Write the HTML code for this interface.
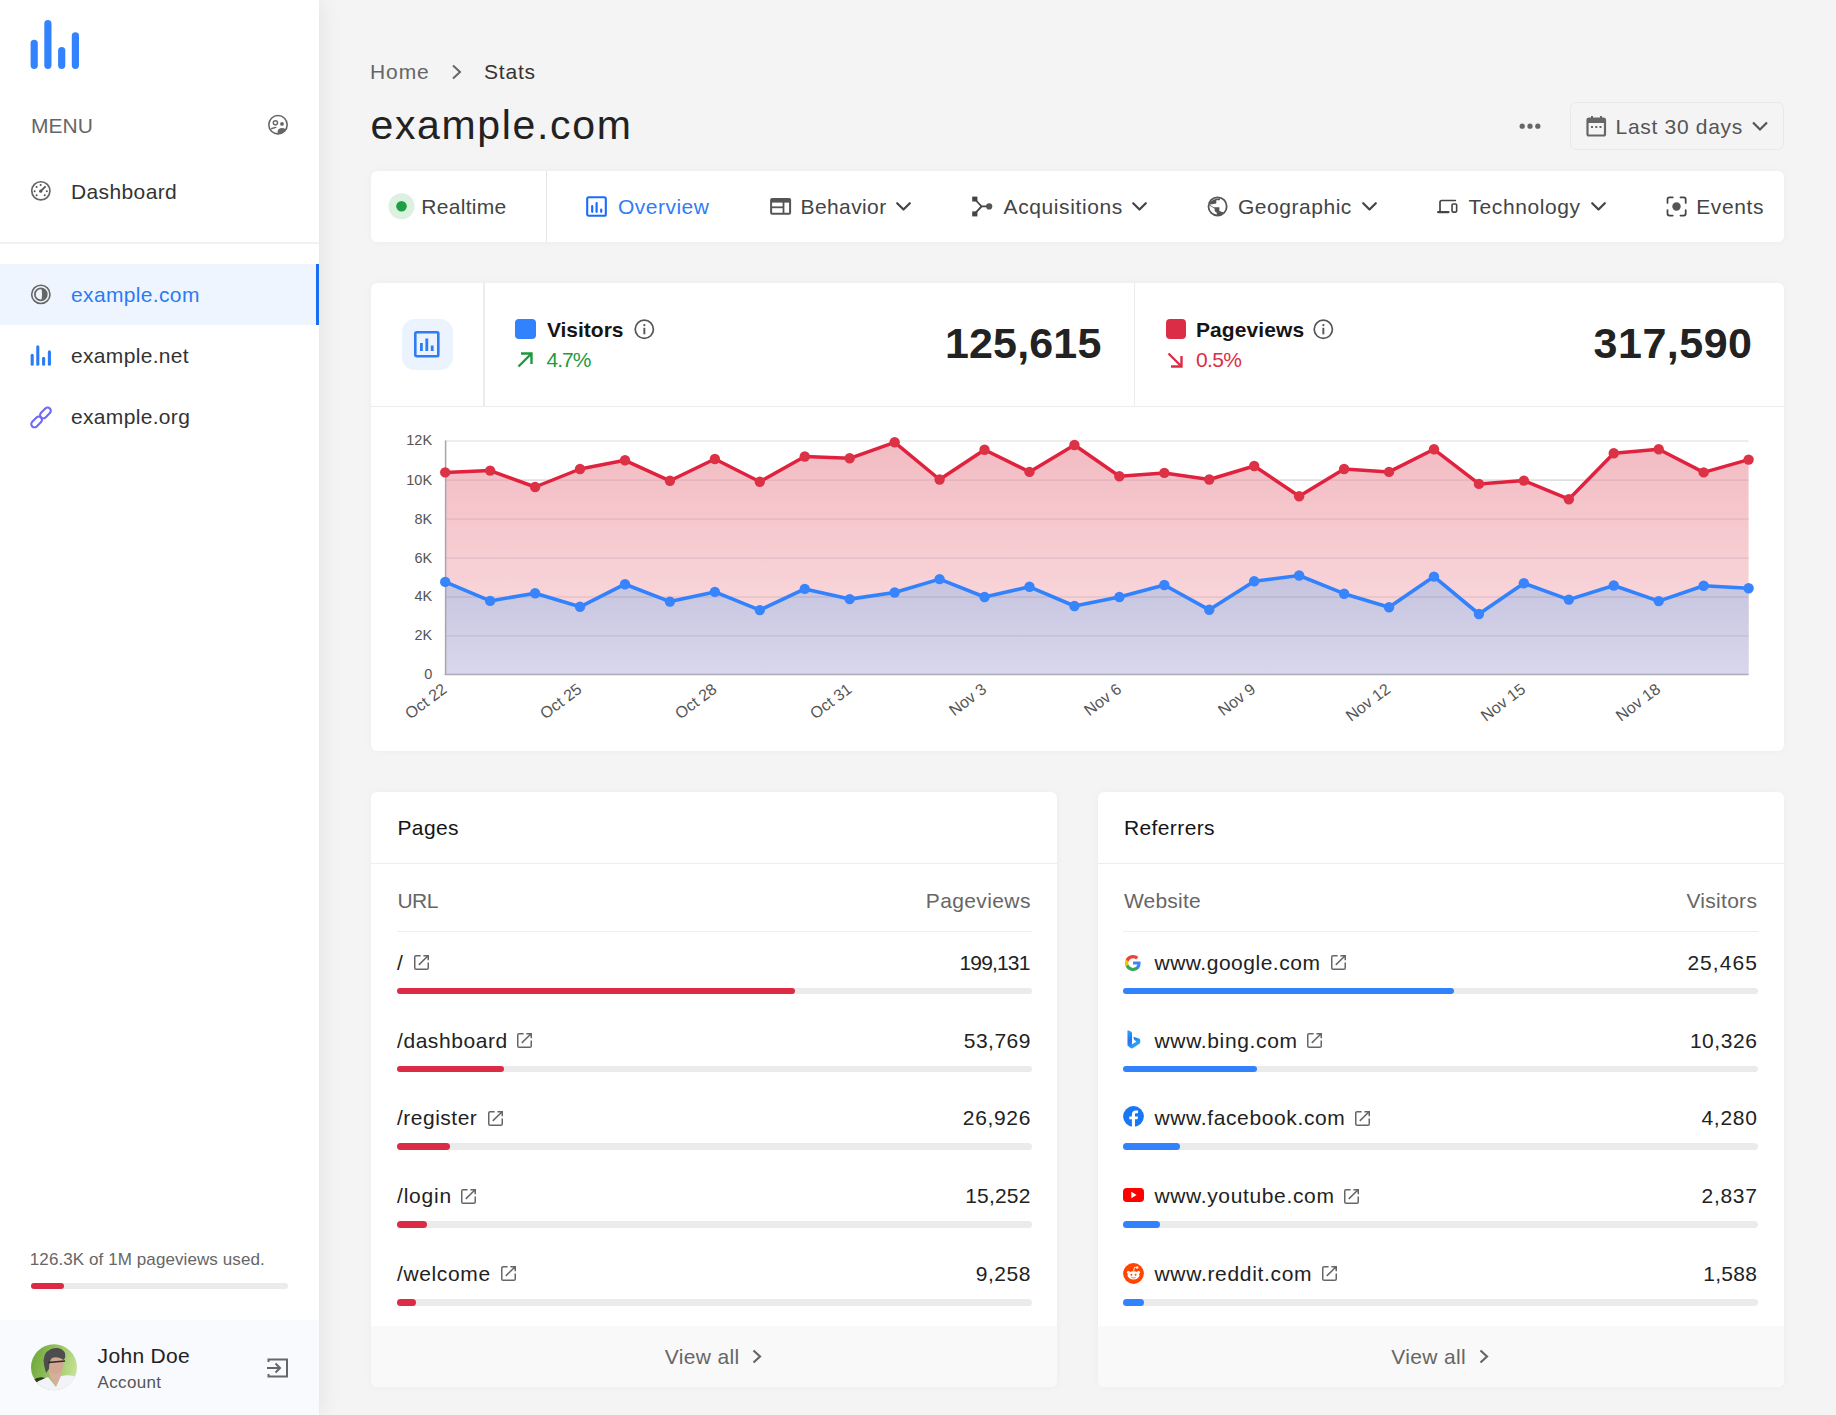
<!DOCTYPE html><html><head><meta charset="utf-8"><style>
html,body{margin:0;padding:0;width:1836px;height:1415px;overflow:hidden;background:#f4f4f4;font-family:'Liberation Sans',sans-serif;}
.t{position:absolute;line-height:1;white-space:nowrap;}
.a{position:absolute;}
svg{position:absolute;overflow:visible;}
</style></head><body>
<div class="a" style="left:0;top:0;width:319px;height:1415px;background:#fff;box-shadow:0 0 22px rgba(0,0,0,0.085);"></div>
<svg style="left:0;top:0" width="100" height="80"><g stroke="#3382fe" stroke-width="7.2" stroke-linecap="round"><line x1="34.2" y1="43.3" x2="34.2" y2="65.3"/><line x1="47.9" y1="23.7" x2="47.9" y2="65.3"/><line x1="61.7" y1="50.5" x2="61.7" y2="65.3"/><line x1="75.4" y1="35.9" x2="75.4" y2="65.3"/></g></svg>
<div class="t" style="left:31px;top:114.72px;font-size:21px;color:#666;font-weight:400;letter-spacing:0px;">MENU</div>
<svg style="left:267px;top:114px" width="22" height="22" viewBox="0 0 22 22"><circle cx="11" cy="10.7" r="9.2" fill="none" stroke="#666" stroke-width="1.6"/><circle cx="8.4" cy="8.8" r="2.1" fill="none" stroke="#666" stroke-width="1.4"/><circle cx="15" cy="9.9" r="1.9" fill="#666"/><path d="M10.6 19.9 Q10.3 16.3 11.5 15.2 Q13.5 13.8 16.5 14.2 Q18.3 14.5 19.3 15.3 Q17.2 19.6 12 19.95 Z" fill="#666"/><path d="M4.8 14.5 L8.8 13.4" fill="none" stroke="#666" stroke-width="1.5" stroke-linecap="round"/></svg>
<svg style="left:30px;top:180px" width="22" height="22" viewBox="0 0 22 22"><circle cx="10.84" cy="10.84" r="9.1" fill="none" stroke="#666" stroke-width="1.7"/><path d="M10.7 11.2 L15.1 6.8" stroke="#555" stroke-width="1.8" stroke-linecap="round"/><circle cx="10.7" cy="11.2" r="1.6" fill="#555"/><g fill="#555"><circle cx="10.64" cy="5.04" r="1"/><circle cx="6.64" cy="7.04" r="1"/><circle cx="4.64" cy="11.14" r="1"/><circle cx="16.84" cy="11.14" r="1"/><circle cx="6.64" cy="15.14" r="1"/><circle cx="14.74" cy="15.14" r="1"/></g></svg>
<div class="t" style="left:71px;top:181.32px;font-size:21px;color:#333;font-weight:400;letter-spacing:0.38px;">Dashboard</div>
<div class="a" style="left:0;top:242px;width:319px;height:2px;background:#f1f1f1"></div>
<div class="a" style="left:0;top:264px;width:319px;height:61px;background:#eff5fe"></div>
<div class="a" style="left:316px;top:264px;width:3px;height:61px;background:#1a6ef5"></div>
<svg style="left:30px;top:284px" width="22" height="22" viewBox="0 0 22 22"><circle cx="10.84" cy="10.4" r="9.15" fill="none" stroke="#666" stroke-width="1.6"/><circle cx="10.84" cy="10.4" r="5.95" fill="none" stroke="#666" stroke-width="1.7"/><path d="M11.6 4.5 A5.95 5.95 0 0 1 11.6 16.3 Q12.6 10.4 11.6 4.5 Z" fill="#666"/></svg>
<div class="t" style="left:71px;top:284.42px;font-size:21px;color:#2a7bf5;font-weight:400;letter-spacing:0.35px;">example.com</div>
<svg style="left:30px;top:345px" width="22" height="22"><g stroke="#2b7bf6" stroke-width="3.1" stroke-linecap="round"><line x1="2.2" y1="10.2" x2="2.2" y2="19.2"/><line x1="7.8" y1="1.7" x2="7.8" y2="19.2"/><line x1="13.6" y1="13.3" x2="13.6" y2="19.2"/><line x1="19.4" y1="6.9" x2="19.4" y2="19.2"/></g></svg>
<div class="t" style="left:71px;top:345.42px;font-size:21px;color:#333;font-weight:400;letter-spacing:0.33px;">example.net</div>
<svg style="left:30px;top:406px" width="22" height="22" viewBox="0 0 22 22"><g fill="none" stroke="#6e69f7" stroke-width="2.1"><rect x="9.2" y="3.8" width="12.5" height="6.4" rx="3.2" transform="rotate(-45 15.4 7)"/><rect x="0.4" y="12.8" width="12.5" height="6.4" rx="3.2" transform="rotate(-45 6.6 16)"/></g></svg>
<div class="t" style="left:71px;top:406.42px;font-size:21px;color:#333;font-weight:400;letter-spacing:0.33px;">example.org</div>
<div class="t" style="left:29.8px;top:1251.31px;font-size:17px;color:#666;font-weight:400;letter-spacing:0.09px;">126.3K of 1M pageviews used.</div>
<div class="a" style="left:31px;top:1282.5px;width:257px;height:6.5px;border-radius:4px;background:#ebebeb"></div>
<div class="a" style="left:31px;top:1282.5px;width:33px;height:6.5px;border-radius:4px;background:#dc2a44"></div>
<div class="a" style="left:0;top:1319.5px;width:319px;height:96px;background:#f8fafe"></div>
<svg style="left:30.5px;top:1344px" width="46" height="47" viewBox="0 0 46 47"><defs><clipPath id="av"><circle cx="23" cy="23.3" r="23"/></clipPath><linearGradient id="avg" x1="0" y1="0.3" x2="1" y2="0.6"><stop offset="0" stop-color="#6fa83a"/><stop offset="0.5" stop-color="#98c461"/><stop offset="1" stop-color="#c9e39a"/></linearGradient></defs><g clip-path="url(#av)"><rect width="46" height="47" fill="url(#avg)"/><path d="M2 36 Q8 32 14 34 L8 40 Z" fill="#2a3a1a"/><path d="M17 24 L31 24 L30 33 L25 43 L19 33 Z" fill="#d6ae9c"/><path d="M0 42 Q8 36 17 33 L25 43 L30 32 Q38 30 46 33 L46 47 L0 47 Z" fill="#f1f3f8"/><ellipse cx="24.5" cy="19.5" rx="8" ry="10.5" fill="#d2a893"/><path d="M13 21 Q11 9 20 5 Q30 2 34 9 Q35 13 33 16 Q27 12 21 14 Q18 17 18 25 L15 29 Z" fill="#4d4d4d"/><path d="M17 18.5 L34 17" stroke="#2b2b2b" stroke-width="1.6"/></g></svg>
<div class="t" style="left:97.6px;top:1345.22px;font-size:21px;color:#222;font-weight:400;letter-spacing:0.33px;">John Doe</div>
<div class="t" style="left:97.6px;top:1373.61px;font-size:17px;color:#555;font-weight:400;letter-spacing:0.33px;">Account</div>
<svg style="left:266px;top:1356.5px" width="23" height="22" viewBox="0 0 23 22"><path d="M2.5 5 V2.5 H21 V19.5 H2.5 V17" fill="none" stroke="#666" stroke-width="2"/><path d="M1 11 H14 M9.5 6.5 L14 11 L9.5 15.5" fill="none" stroke="#666" stroke-width="2"/></svg>
<div class="t" style="left:370px;top:61.32px;font-size:21px;color:#666;font-weight:400;letter-spacing:0.9px;">Home</div>
<svg style="left:450px;top:63px" width="14" height="18"><path d="M3 2.5 L10 9 L3 15.5" fill="none" stroke="#666" stroke-width="2"/></svg>
<div class="t" style="left:484px;top:61.32px;font-size:21px;color:#333;font-weight:400;letter-spacing:0.8px;">Stats</div>
<div class="t" style="left:370.5px;top:105.19px;font-size:41px;color:#222;font-weight:400;letter-spacing:1.65px;">example.com</div>
<svg style="left:1518px;top:121px" width="24" height="10"><circle cx="4.2" cy="5.2" r="2.6" fill="#666"/><circle cx="12" cy="5.2" r="2.6" fill="#666"/><circle cx="19.8" cy="5.2" r="2.6" fill="#666"/></svg>
<div class="a" style="left:1570px;top:102px;width:211.5px;height:46px;border:1px solid #e9e9e9;border-radius:6px;background:#f4f4f4"></div>
<svg style="left:1586px;top:115px" width="21" height="23" viewBox="0 0 21 23"><rect x="1.5" y="3.5" width="17.5" height="17" rx="1.5" fill="none" stroke="#666" stroke-width="2.2"/><rect x="1.5" y="3.5" width="17.5" height="4.5" fill="#666"/><rect x="5" y="1" width="2" height="4" fill="#666"/><rect x="14" y="1" width="2" height="4" fill="#666"/><rect x="5" y="11" width="2" height="2" fill="#666"/><rect x="9.3" y="11" width="2" height="2" fill="#666"/><rect x="13.5" y="11" width="2" height="2" fill="#666"/></svg>
<div class="t" style="left:1615.5px;top:116.02px;font-size:21px;color:#555;font-weight:400;letter-spacing:0.7px;">Last 30 days</div>
<svg style="left:1751px;top:120px" width="18" height="12"><path d="M2 2.5 L9 9.5 L16 2.5" fill="none" stroke="#555" stroke-width="2.2"/></svg>
<div class="a" style="left:371px;top:171px;width:1412.6px;height:71px;background:#fff;border-radius:6px;box-shadow:0 0 8px rgba(0,0,0,0.035)"></div>
<div class="a" style="left:545.8px;top:171px;width:1px;height:71px;background:#e6e6e6"></div>
<svg style="left:388px;top:193px" width="27" height="27"><circle cx="13.5" cy="13.2" r="13" fill="#dcf1e0"/><circle cx="13.5" cy="13.2" r="5.3" fill="#1f9f43"/></svg>
<div class="t" style="left:421.3px;top:196.12px;font-size:21px;color:#444;font-weight:400;letter-spacing:0.3px;">Realtime</div>
<svg style="left:586px;top:196px" width="21" height="21" viewBox="0 0 21 21"><rect x="1.2" y="1.2" width="18.6" height="18.6" rx="1.6" fill="none" stroke="#1a6cfc" stroke-width="2.1"/><line x1="6.2" y1="10" x2="6.2" y2="15.8" stroke="#1a6cfc" stroke-width="2.2" stroke-linecap="round"/><line x1="10.6" y1="7" x2="10.6" y2="15.8" stroke="#1a6cfc" stroke-width="2.2" stroke-linecap="round"/><line x1="15.2" y1="13.7" x2="15.2" y2="15.8" stroke="#1a6cfc" stroke-width="2.2" stroke-linecap="round"/></svg>
<div class="t" style="left:618px;top:196.12px;font-size:21px;color:#2f7cf6;font-weight:400;letter-spacing:0.49px;">Overview</div>
<svg style="left:769.5px;top:198px" width="22" height="17" viewBox="0 0 22 17"><rect x="1.1" y="1.1" width="19" height="14.6" rx="1" fill="none" stroke="#555" stroke-width="2"/><rect x="1.1" y="1.1" width="19" height="3.5" fill="#555"/><line x1="1" y1="9.3" x2="13" y2="9.3" stroke="#555" stroke-width="1.8"/><line x1="13.5" y1="4" x2="13.5" y2="16" stroke="#555" stroke-width="1.8"/></svg>
<div class="t" style="left:800.5px;top:196.12px;font-size:21px;color:#444;font-weight:400;letter-spacing:0.4px;">Behavior</div>
<svg style="left:895.0px;top:201px" width="17" height="11"><path d="M2.2 2.2 L8.5 8.5 L14.8 2.2" fill="none" stroke="#444" stroke-width="2.2" stroke-linecap="round" stroke-linejoin="round"/></svg>
<svg style="left:970.5px;top:196px" width="23" height="22" viewBox="0 0 23 22"><rect x="1.2" y="0.6" width="5.2" height="4.9" fill="#444"/><rect x="1.2" y="15.4" width="5.2" height="5" fill="#444"/><circle cx="18.2" cy="10.4" r="3.1" fill="#555"/><path d="M4.5 4 L10.6 10.4 L4.5 16.8 M10.6 10.4 H16" fill="none" stroke="#444" stroke-width="1.8"/></svg>
<div class="t" style="left:1003.6px;top:196.12px;font-size:21px;color:#444;font-weight:400;letter-spacing:0.6px;">Acquisitions</div>
<svg style="left:1131.0px;top:201px" width="17" height="11"><path d="M2.2 2.2 L8.5 8.5 L14.8 2.2" fill="none" stroke="#444" stroke-width="2.2" stroke-linecap="round" stroke-linejoin="round"/></svg>
<svg style="left:1207px;top:196px" width="22" height="22" viewBox="0 0 22 22"><circle cx="10.6" cy="10.4" r="9.1" fill="none" stroke="#555" stroke-width="1.8"/><path d="M2.2 7.8 Q5 2.5 13.4 2.2 L12.7 4.2 H9.3 V7.4 L6.3 8.1 L3.2 8.6 Z" fill="#555"/><path d="M2.6 8.4 L6.5 11.3 H12.4 V15.1 L16.6 16.4 Q14.5 19 10.1 19.5 L9.7 16.7 L7.7 14.9 V12.7 L2.6 9.6 Z" fill="#555"/></svg>
<div class="t" style="left:1238px;top:196.12px;font-size:21px;color:#444;font-weight:400;letter-spacing:0.53px;">Geographic</div>
<svg style="left:1360.5px;top:201px" width="17" height="11"><path d="M2.2 2.2 L8.5 8.5 L14.8 2.2" fill="none" stroke="#444" stroke-width="2.2" stroke-linecap="round" stroke-linejoin="round"/></svg>
<svg style="left:1436.5px;top:198px" width="22" height="17" viewBox="0 0 22 17"><path d="M3 13.7 V4.2 Q3 2.5 4.7 2.5 H18.3" fill="none" stroke="#444" stroke-width="1.7" stroke-linecap="round"/><line x1="1.1" y1="14.05" x2="11.5" y2="14.05" stroke="#444" stroke-width="2.2" stroke-linecap="round"/><rect x="15.05" y="5.95" width="4.6" height="8.15" rx="1" fill="none" stroke="#444" stroke-width="1.6"/></svg>
<div class="t" style="left:1468.4px;top:196.12px;font-size:21px;color:#444;font-weight:400;letter-spacing:0.61px;">Technology</div>
<svg style="left:1589.5px;top:201px" width="17" height="11"><path d="M2.2 2.2 L8.5 8.5 L14.8 2.2" fill="none" stroke="#444" stroke-width="2.2" stroke-linecap="round" stroke-linejoin="round"/></svg>
<svg style="left:1665px;top:196px" width="23" height="22" viewBox="0 0 23 22"><path d="M2.5 6.9 V3.4 Q2.5 1.4 4.5 1.4 H7.7 M15.5 1.4 H18.7 Q20.7 1.4 20.7 3.4 V6.9 M20.7 14.1 V17.6 Q20.7 19.6 18.7 19.6 H15.5 M7.7 19.6 H4.5 Q2.5 19.6 2.5 17.6 V14.1" fill="none" stroke="#444" stroke-width="1.75" stroke-linecap="round"/><circle cx="11.5" cy="10.5" r="4.2" fill="#555"/></svg>
<div class="t" style="left:1696.2px;top:196.12px;font-size:21px;color:#444;font-weight:400;letter-spacing:0.6px;">Events</div>
<div class="a" style="left:371px;top:283px;width:1412.6px;height:468px;background:#fff;border-radius:6px;box-shadow:0 0 8px rgba(0,0,0,0.035)"></div>
<div class="a" style="left:483px;top:283px;width:1.5px;height:123px;background:#ececec"></div>
<div class="a" style="left:1133.5px;top:283px;width:1.5px;height:123px;background:#ececec"></div>
<div class="a" style="left:371px;top:405.5px;width:1412.5px;height:1.5px;background:#ececec"></div>
<div class="a" style="left:402px;top:319px;width:51px;height:50.5px;border-radius:13px;background:#ebf3fe"></div>
<svg style="left:414px;top:331px" width="26" height="27" viewBox="0 0 26 27"><rect x="1.3" y="1.3" width="23" height="24" rx="1.2" fill="none" stroke="#2f7cf6" stroke-width="2.6"/><rect x="6" y="12" width="2.8" height="8" fill="#2f7cf6"/><rect x="11.4" y="7.5" width="2.8" height="12.5" fill="#2f7cf6"/><rect x="16.8" y="14.5" width="2.8" height="5.5" fill="#2f7cf6"/></svg>
<div class="a" style="left:515px;top:319px;width:20.5px;height:20px;border-radius:4px;background:#3281fd"></div>
<div class="t" style="left:546.9px;top:318.52px;font-size:21px;color:#151515;font-weight:700;letter-spacing:0px;">Visitors</div>
<svg style="left:633.5px;top:318.5px" width="21" height="21" viewBox="0 0 21 21"><circle cx="10.3" cy="10.3" r="9.1" fill="none" stroke="#555" stroke-width="1.7"/><rect x="9.4" y="8.8" width="1.9" height="6.5" fill="#555"/><circle cx="10.35" cy="6.1" r="1.15" fill="#555"/></svg>
<svg style="left:516px;top:351px" width="19" height="18"><path d="M2.5 15.5 L15.5 2.5 M5 2.5 H15.5 V13" fill="none" stroke="#1e9a3e" stroke-width="2.4"/></svg>
<div class="t" style="left:546.5px;top:349.22px;font-size:21px;color:#1e9a3e;font-weight:400;letter-spacing:-1.0px;">4.7%</div>
<div class="t" style="right:734.5px;top:321.50px;font-size:43px;color:#222;font-weight:700;letter-spacing:0.17px;">125,615</div>
<div class="a" style="left:1165.5px;top:319px;width:20.5px;height:20px;border-radius:4px;background:#dc2d46"></div>
<div class="t" style="left:1196px;top:318.52px;font-size:21px;color:#151515;font-weight:700;letter-spacing:0.09px;">Pageviews</div>
<svg style="left:1313px;top:318.5px" width="21" height="21" viewBox="0 0 21 21"><circle cx="10.3" cy="10.3" r="9.1" fill="none" stroke="#555" stroke-width="1.7"/><rect x="9.4" y="8.8" width="1.9" height="6.5" fill="#555"/><circle cx="10.35" cy="6.1" r="1.15" fill="#555"/></svg>
<svg style="left:1166px;top:351px" width="19" height="18"><path d="M2.5 2.5 L15.5 15.5 M5 15.5 H15.5 V5" fill="none" stroke="#dc2d46" stroke-width="2.4"/></svg>
<div class="t" style="left:1196px;top:349.22px;font-size:21px;color:#dc2d46;font-weight:400;letter-spacing:-0.67px;">0.5%</div>
<div class="t" style="right:83.5px;top:322.20px;font-size:43px;color:#222;font-weight:700;letter-spacing:0.5px;">317,590</div>
<svg style="left:0;top:0" width="1836" height="760" viewBox="0 0 1836 760"><defs><linearGradient id="rg" x1="0" y1="440" x2="0" y2="674" gradientUnits="userSpaceOnUse"><stop offset="0" stop-color="#f2bbc2"/><stop offset="1" stop-color="#fbe0e3"/></linearGradient><linearGradient id="bg" x1="0" y1="575" x2="0" y2="674" gradientUnits="userSpaceOnUse"><stop offset="0" stop-color="#c6c3df"/><stop offset="1" stop-color="#d9d7eb"/></linearGradient></defs><line x1="445.2" y1="441" x2="1748.6" y2="441" stroke="#e8e8e8" stroke-width="1.3"/><line x1="445.2" y1="480.1" x2="1748.6" y2="480.1" stroke="#e8e8e8" stroke-width="1.3"/><line x1="445.2" y1="519.2" x2="1748.6" y2="519.2" stroke="#e8e8e8" stroke-width="1.3"/><line x1="445.2" y1="558.1" x2="1748.6" y2="558.1" stroke="#e8e8e8" stroke-width="1.3"/><line x1="445.2" y1="597" x2="1748.6" y2="597" stroke="#e8e8e8" stroke-width="1.3"/><line x1="445.2" y1="635.8" x2="1748.6" y2="635.8" stroke="#e8e8e8" stroke-width="1.3"/><polygon points="445.2,674.2 445.20,472.4 490.14,470.6 535.09,487 580.03,469 624.98,460.3 669.92,480.8 714.87,459 759.81,481.8 804.76,456.5 849.70,458.3 894.65,442.3 939.59,479.5 984.54,449.8 1029.48,471.9 1074.43,445 1119.37,476.2 1164.32,472.9 1209.26,479.5 1254.21,466 1299.15,496.2 1344.10,469 1389.04,471.9 1433.99,449.3 1478.93,483.9 1523.88,480.6 1568.82,499.2 1613.77,453.2 1658.71,449.3 1703.66,472.4 1748.60,459.6 1748.6,674.2" fill="url(#rg)"/><polygon points="445.2,674.2 445.20,581.9 490.14,600.9 535.09,593.2 580.03,606.8 624.98,584.2 669.92,601.6 714.87,591.9 759.81,610.1 804.76,588.9 849.70,599.1 894.65,592.5 939.59,579.1 984.54,597 1029.48,586.8 1074.43,606 1119.37,597 1164.32,585 1209.26,609.8 1254.21,581.2 1299.15,575.5 1344.10,593.7 1389.04,607.3 1433.99,576.6 1478.93,614 1523.88,583.2 1568.82,599.6 1613.77,585.5 1658.71,601.1 1703.66,585.8 1748.60,588.3 1748.6,674.2" fill="url(#bg)"/><line x1="445.2" y1="480.1" x2="1748.6" y2="480.1" stroke="rgba(100,70,100,0.13)" stroke-width="1.3"/><line x1="445.2" y1="519.2" x2="1748.6" y2="519.2" stroke="rgba(100,70,100,0.13)" stroke-width="1.3"/><line x1="445.2" y1="558.1" x2="1748.6" y2="558.1" stroke="rgba(100,70,100,0.13)" stroke-width="1.3"/><line x1="445.2" y1="597" x2="1748.6" y2="597" stroke="rgba(100,70,100,0.13)" stroke-width="1.3"/><line x1="445.2" y1="635.8" x2="1748.6" y2="635.8" stroke="rgba(100,70,100,0.13)" stroke-width="1.3"/><line x1="445.59999999999997" y1="440.5" x2="445.59999999999997" y2="674.8" stroke="#a6a6ae" stroke-width="1.5"/><line x1="444.5" y1="674.5" x2="1748.6" y2="674.5" stroke="#acabb8" stroke-width="1.5"/><polyline points="445.20,472.4 490.14,470.6 535.09,487 580.03,469 624.98,460.3 669.92,480.8 714.87,459 759.81,481.8 804.76,456.5 849.70,458.3 894.65,442.3 939.59,479.5 984.54,449.8 1029.48,471.9 1074.43,445 1119.37,476.2 1164.32,472.9 1209.26,479.5 1254.21,466 1299.15,496.2 1344.10,469 1389.04,471.9 1433.99,449.3 1478.93,483.9 1523.88,480.6 1568.82,499.2 1613.77,453.2 1658.71,449.3 1703.66,472.4 1748.60,459.6" fill="none" stroke="#e0223f" stroke-width="3.5" stroke-linejoin="round"/><circle cx="445.20" cy="472.4" r="5.2" fill="#dd3246"/><circle cx="490.14" cy="470.6" r="5.2" fill="#dd3246"/><circle cx="535.09" cy="487" r="5.2" fill="#dd3246"/><circle cx="580.03" cy="469" r="5.2" fill="#dd3246"/><circle cx="624.98" cy="460.3" r="5.2" fill="#dd3246"/><circle cx="669.92" cy="480.8" r="5.2" fill="#dd3246"/><circle cx="714.87" cy="459" r="5.2" fill="#dd3246"/><circle cx="759.81" cy="481.8" r="5.2" fill="#dd3246"/><circle cx="804.76" cy="456.5" r="5.2" fill="#dd3246"/><circle cx="849.70" cy="458.3" r="5.2" fill="#dd3246"/><circle cx="894.65" cy="442.3" r="5.2" fill="#dd3246"/><circle cx="939.59" cy="479.5" r="5.2" fill="#dd3246"/><circle cx="984.54" cy="449.8" r="5.2" fill="#dd3246"/><circle cx="1029.48" cy="471.9" r="5.2" fill="#dd3246"/><circle cx="1074.43" cy="445" r="5.2" fill="#dd3246"/><circle cx="1119.37" cy="476.2" r="5.2" fill="#dd3246"/><circle cx="1164.32" cy="472.9" r="5.2" fill="#dd3246"/><circle cx="1209.26" cy="479.5" r="5.2" fill="#dd3246"/><circle cx="1254.21" cy="466" r="5.2" fill="#dd3246"/><circle cx="1299.15" cy="496.2" r="5.2" fill="#dd3246"/><circle cx="1344.10" cy="469" r="5.2" fill="#dd3246"/><circle cx="1389.04" cy="471.9" r="5.2" fill="#dd3246"/><circle cx="1433.99" cy="449.3" r="5.2" fill="#dd3246"/><circle cx="1478.93" cy="483.9" r="5.2" fill="#dd3246"/><circle cx="1523.88" cy="480.6" r="5.2" fill="#dd3246"/><circle cx="1568.82" cy="499.2" r="5.2" fill="#dd3246"/><circle cx="1613.77" cy="453.2" r="5.2" fill="#dd3246"/><circle cx="1658.71" cy="449.3" r="5.2" fill="#dd3246"/><circle cx="1703.66" cy="472.4" r="5.2" fill="#dd3246"/><circle cx="1748.60" cy="459.6" r="5.2" fill="#dd3246"/><polyline points="445.20,581.9 490.14,600.9 535.09,593.2 580.03,606.8 624.98,584.2 669.92,601.6 714.87,591.9 759.81,610.1 804.76,588.9 849.70,599.1 894.65,592.5 939.59,579.1 984.54,597 1029.48,586.8 1074.43,606 1119.37,597 1164.32,585 1209.26,609.8 1254.21,581.2 1299.15,575.5 1344.10,593.7 1389.04,607.3 1433.99,576.6 1478.93,614 1523.88,583.2 1568.82,599.6 1613.77,585.5 1658.71,601.1 1703.66,585.8 1748.60,588.3" fill="none" stroke="#3282fd" stroke-width="3.6" stroke-linejoin="round"/><circle cx="445.20" cy="581.9" r="5.2" fill="#3784fd"/><circle cx="490.14" cy="600.9" r="5.2" fill="#3784fd"/><circle cx="535.09" cy="593.2" r="5.2" fill="#3784fd"/><circle cx="580.03" cy="606.8" r="5.2" fill="#3784fd"/><circle cx="624.98" cy="584.2" r="5.2" fill="#3784fd"/><circle cx="669.92" cy="601.6" r="5.2" fill="#3784fd"/><circle cx="714.87" cy="591.9" r="5.2" fill="#3784fd"/><circle cx="759.81" cy="610.1" r="5.2" fill="#3784fd"/><circle cx="804.76" cy="588.9" r="5.2" fill="#3784fd"/><circle cx="849.70" cy="599.1" r="5.2" fill="#3784fd"/><circle cx="894.65" cy="592.5" r="5.2" fill="#3784fd"/><circle cx="939.59" cy="579.1" r="5.2" fill="#3784fd"/><circle cx="984.54" cy="597" r="5.2" fill="#3784fd"/><circle cx="1029.48" cy="586.8" r="5.2" fill="#3784fd"/><circle cx="1074.43" cy="606" r="5.2" fill="#3784fd"/><circle cx="1119.37" cy="597" r="5.2" fill="#3784fd"/><circle cx="1164.32" cy="585" r="5.2" fill="#3784fd"/><circle cx="1209.26" cy="609.8" r="5.2" fill="#3784fd"/><circle cx="1254.21" cy="581.2" r="5.2" fill="#3784fd"/><circle cx="1299.15" cy="575.5" r="5.2" fill="#3784fd"/><circle cx="1344.10" cy="593.7" r="5.2" fill="#3784fd"/><circle cx="1389.04" cy="607.3" r="5.2" fill="#3784fd"/><circle cx="1433.99" cy="576.6" r="5.2" fill="#3784fd"/><circle cx="1478.93" cy="614" r="5.2" fill="#3784fd"/><circle cx="1523.88" cy="583.2" r="5.2" fill="#3784fd"/><circle cx="1568.82" cy="599.6" r="5.2" fill="#3784fd"/><circle cx="1613.77" cy="585.5" r="5.2" fill="#3784fd"/><circle cx="1658.71" cy="601.1" r="5.2" fill="#3784fd"/><circle cx="1703.66" cy="585.8" r="5.2" fill="#3784fd"/><circle cx="1748.60" cy="588.3" r="5.2" fill="#3784fd"/></svg>
<div class="t" style="right:1403.7px;top:433.43px;font-size:14.5px;color:#555;font-weight:400;letter-spacing:0.1px;">12K</div>
<div class="t" style="right:1403.7px;top:472.53px;font-size:14.5px;color:#555;font-weight:400;letter-spacing:0.1px;">10K</div>
<div class="t" style="right:1403.7px;top:511.63px;font-size:14.5px;color:#555;font-weight:400;letter-spacing:0.1px;">8K</div>
<div class="t" style="right:1403.7px;top:550.53px;font-size:14.5px;color:#555;font-weight:400;letter-spacing:0.1px;">6K</div>
<div class="t" style="right:1403.7px;top:589.43px;font-size:14.5px;color:#555;font-weight:400;letter-spacing:0.1px;">4K</div>
<div class="t" style="right:1403.7px;top:628.23px;font-size:14.5px;color:#555;font-weight:400;letter-spacing:0.1px;">2K</div>
<div class="t" style="right:1403.7px;top:666.73px;font-size:14.5px;color:#555;font-weight:400;letter-spacing:0.1px;">0</div>
<div class="t" style="right:1395.80px;top:681px;font-size:16px;color:#555;letter-spacing:0px;transform-origin:100% 0;transform:rotate(-37deg)">Oct 22</div>
<div class="t" style="right:1260.97px;top:681px;font-size:16px;color:#555;letter-spacing:0px;transform-origin:100% 0;transform:rotate(-37deg)">Oct 25</div>
<div class="t" style="right:1126.13px;top:681px;font-size:16px;color:#555;letter-spacing:0px;transform-origin:100% 0;transform:rotate(-37deg)">Oct 28</div>
<div class="t" style="right:991.30px;top:681px;font-size:16px;color:#555;letter-spacing:0px;transform-origin:100% 0;transform:rotate(-37deg)">Oct 31</div>
<div class="t" style="right:856.46px;top:681px;font-size:16px;color:#555;letter-spacing:0px;transform-origin:100% 0;transform:rotate(-37deg)">Nov 3</div>
<div class="t" style="right:721.63px;top:681px;font-size:16px;color:#555;letter-spacing:0px;transform-origin:100% 0;transform:rotate(-37deg)">Nov 6</div>
<div class="t" style="right:586.79px;top:681px;font-size:16px;color:#555;letter-spacing:0px;transform-origin:100% 0;transform:rotate(-37deg)">Nov 9</div>
<div class="t" style="right:451.96px;top:681px;font-size:16px;color:#555;letter-spacing:0px;transform-origin:100% 0;transform:rotate(-37deg)">Nov 12</div>
<div class="t" style="right:317.12px;top:681px;font-size:16px;color:#555;letter-spacing:0px;transform-origin:100% 0;transform:rotate(-37deg)">Nov 15</div>
<div class="t" style="right:182.29px;top:681px;font-size:16px;color:#555;letter-spacing:0px;transform-origin:100% 0;transform:rotate(-37deg)">Nov 18</div>
<div class="a" style="left:371px;top:792px;width:686px;height:595px;background:#fff;border-radius:6px;overflow:hidden;box-shadow:0 0 8px rgba(0,0,0,0.035)"><div class="a" style="left:0;top:534px;width:686px;height:61px;background:#f9f9f9"></div></div>
<div class="a" style="left:371px;top:862.5px;width:686px;height:1.5px;background:#eeeeee"></div>
<div class="a" style="left:396.5px;top:930.5px;width:635px;height:1.5px;background:#eeeeee"></div>
<div class="t" style="left:397.4px;top:817.02px;font-size:21px;color:#151515;font-weight:400;letter-spacing:0.4px;">Pages</div>
<div class="t" style="left:397.4px;top:889.82px;font-size:21px;color:#666;font-weight:400;letter-spacing:-0.5px;">URL</div>
<div class="t" style="right:805.2199999999998px;top:889.82px;font-size:21px;color:#666;font-weight:400;letter-spacing:0.38px;">Pageviews</div>
<div class="t" style="left:397px;top:951.82px;font-size:21px;color:#222;font-weight:400;letter-spacing:0px;">/</div>
<svg style="left:414.4px;top:955.2px" width="16" height="16" viewBox="0 0 16 16"><path d="M6.6 0.75 H2.1 Q0.75 0.75 0.75 2.1 V12.9 Q0.75 14.25 2.1 14.25 H12.9 Q14.25 14.25 14.25 12.9 V7.6" fill="none" stroke="#666" stroke-width="1.5"/><path d="M4.8 9.9 L13.6 1.3 M9.4 0.75 H14.25 V5.2" fill="none" stroke="#666" stroke-width="1.5"/></svg>
<div class="t" style="right:806.4299999999998px;top:951.82px;font-size:21px;color:#222;font-weight:400;letter-spacing:-0.83px;">199,131</div>
<div class="a" style="left:396.5px;top:987.80px;width:635px;height:6.5px;border-radius:4px;background:#ebebeb"></div>
<div class="a" style="left:396.5px;top:987.80px;width:398px;height:6.5px;border-radius:4px;background:#dc2b44"></div>
<div class="t" style="left:397px;top:1029.62px;font-size:21px;color:#222;font-weight:400;letter-spacing:0.56px;">/dashboard</div>
<svg style="left:517.4px;top:1033.0px" width="16" height="16" viewBox="0 0 16 16"><path d="M6.6 0.75 H2.1 Q0.75 0.75 0.75 2.1 V12.9 Q0.75 14.25 2.1 14.25 H12.9 Q14.25 14.25 14.25 12.9 V7.6" fill="none" stroke="#666" stroke-width="1.5"/><path d="M4.8 9.9 L13.6 1.3 M9.4 0.75 H14.25 V5.2" fill="none" stroke="#666" stroke-width="1.5"/></svg>
<div class="t" style="right:805.1199999999999px;top:1029.62px;font-size:21px;color:#222;font-weight:400;letter-spacing:0.48px;">53,769</div>
<div class="a" style="left:396.5px;top:1065.60px;width:635px;height:6.5px;border-radius:4px;background:#ebebeb"></div>
<div class="a" style="left:396.5px;top:1065.60px;width:107px;height:6.5px;border-radius:4px;background:#dc2b44"></div>
<div class="t" style="left:397px;top:1107.42px;font-size:21px;color:#222;font-weight:400;letter-spacing:0.5px;">/register</div>
<svg style="left:488.4px;top:1110.8px" width="16" height="16" viewBox="0 0 16 16"><path d="M6.6 0.75 H2.1 Q0.75 0.75 0.75 2.1 V12.9 Q0.75 14.25 2.1 14.25 H12.9 Q14.25 14.25 14.25 12.9 V7.6" fill="none" stroke="#666" stroke-width="1.5"/><path d="M4.8 9.9 L13.6 1.3 M9.4 0.75 H14.25 V5.2" fill="none" stroke="#666" stroke-width="1.5"/></svg>
<div class="t" style="right:804.9199999999998px;top:1107.42px;font-size:21px;color:#222;font-weight:400;letter-spacing:0.68px;">26,926</div>
<div class="a" style="left:396.5px;top:1143.40px;width:635px;height:6.5px;border-radius:4px;background:#ebebeb"></div>
<div class="a" style="left:396.5px;top:1143.40px;width:53.5px;height:6.5px;border-radius:4px;background:#dc2b44"></div>
<div class="t" style="left:397px;top:1185.22px;font-size:21px;color:#222;font-weight:400;letter-spacing:0.8px;">/login</div>
<svg style="left:461.4px;top:1188.6px" width="16" height="16" viewBox="0 0 16 16"><path d="M6.6 0.75 H2.1 Q0.75 0.75 0.75 2.1 V12.9 Q0.75 14.25 2.1 14.25 H12.9 Q14.25 14.25 14.25 12.9 V7.6" fill="none" stroke="#666" stroke-width="1.5"/><path d="M4.8 9.9 L13.6 1.3 M9.4 0.75 H14.25 V5.2" fill="none" stroke="#666" stroke-width="1.5"/></svg>
<div class="t" style="right:805.3999999999999px;top:1185.22px;font-size:21px;color:#222;font-weight:400;letter-spacing:0.2px;">15,252</div>
<div class="a" style="left:396.5px;top:1221.20px;width:635px;height:6.5px;border-radius:4px;background:#ebebeb"></div>
<div class="a" style="left:396.5px;top:1221.20px;width:30.5px;height:6.5px;border-radius:4px;background:#dc2b44"></div>
<div class="t" style="left:397px;top:1263.02px;font-size:21px;color:#222;font-weight:400;letter-spacing:0.63px;">/welcome</div>
<svg style="left:500.79999999999995px;top:1266.3999999999999px" width="16" height="16" viewBox="0 0 16 16"><path d="M6.6 0.75 H2.1 Q0.75 0.75 0.75 2.1 V12.9 Q0.75 14.25 2.1 14.25 H12.9 Q14.25 14.25 14.25 12.9 V7.6" fill="none" stroke="#666" stroke-width="1.5"/><path d="M4.8 9.9 L13.6 1.3 M9.4 0.75 H14.25 V5.2" fill="none" stroke="#666" stroke-width="1.5"/></svg>
<div class="t" style="right:805.0999999999999px;top:1263.02px;font-size:21px;color:#222;font-weight:400;letter-spacing:0.5px;">9,258</div>
<div class="a" style="left:396.5px;top:1299.00px;width:635px;height:6.5px;border-radius:4px;background:#ebebeb"></div>
<div class="a" style="left:396.5px;top:1299.00px;width:19px;height:6.5px;border-radius:4px;background:#dc2b44"></div>
<div class="t" style="left:664.8px;top:1345.92px;font-size:21px;color:#666;font-weight:400;letter-spacing:0.34px;">View all</div>
<svg style="left:751px;top:1348px" width="12" height="17"><path d="M2.5 2.5 L9 8.5 L2.5 14.5" fill="none" stroke="#666" stroke-width="2.2"/></svg>
<div class="a" style="left:1097.5px;top:792px;width:686px;height:595px;background:#fff;border-radius:6px;overflow:hidden;box-shadow:0 0 8px rgba(0,0,0,0.035)"><div class="a" style="left:0;top:534px;width:686px;height:61px;background:#f9f9f9"></div></div>
<div class="a" style="left:1097.5px;top:862.5px;width:686px;height:1.5px;background:#eeeeee"></div>
<div class="a" style="left:1123.0px;top:930.5px;width:635px;height:1.5px;background:#eeeeee"></div>
<div class="t" style="left:1123.9px;top:817.02px;font-size:21px;color:#151515;font-weight:400;letter-spacing:0.4px;">Referrers</div>
<div class="t" style="left:1123.9px;top:889.82px;font-size:21px;color:#666;font-weight:400;letter-spacing:0.22px;">Website</div>
<div class="t" style="right:78.80999999999995px;top:889.82px;font-size:21px;color:#666;font-weight:400;letter-spacing:0.29px;">Visitors</div>
<svg style="left:1124.5px;top:954.6px" width="16" height="16" viewBox="0 0 16 16"><path d="M15.6 8.2 c0-.6-.05-1.1-.15-1.6 H8 v3 h4.3 c-.2 1-.8 1.9-1.6 2.5 v2 h2.6 c1.5-1.4 2.3-3.5 2.3-5.9z" fill="#4285F4"/><path d="M8 16 c2.2 0 4-.7 5.3-1.9 l-2.6-2 c-.7.5-1.6.8-2.7.8-2.1 0-3.9-1.4-4.5-3.3 H.8 v2.1 C2.1 14.3 4.8 16 8 16z" fill="#34A853"/><path d="M3.5 9.6 c-.2-.5-.3-1-.3-1.6 s.1-1.1.3-1.6 V4.3 H.8 C.3 5.4 0 6.7 0 8 s.3 2.6.8 3.7z" fill="#FBBC05"/><path d="M8 3.2 c1.2 0 2.2.4 3.1 1.2 l2.3-2.3 C12 .8 10.2 0 8 0 4.8 0 2.1 1.8.8 4.3 l2.7 2.1 C4.1 4.6 5.9 3.2 8 3.2z" fill="#EA4335"/></svg>
<div class="t" style="left:1154.5px;top:951.82px;font-size:21px;color:#222;font-weight:400;letter-spacing:0.51px;">www.google.com</div>
<svg style="left:1330.5px;top:955.2px" width="16" height="16" viewBox="0 0 16 16"><path d="M6.6 0.75 H2.1 Q0.75 0.75 0.75 2.1 V12.9 Q0.75 14.25 2.1 14.25 H12.9 Q14.25 14.25 14.25 12.9 V7.6" fill="none" stroke="#666" stroke-width="1.5"/><path d="M4.8 9.9 L13.6 1.3 M9.4 0.75 H14.25 V5.2" fill="none" stroke="#666" stroke-width="1.5"/></svg>
<div class="t" style="right:78.03999999999996px;top:951.82px;font-size:21px;color:#222;font-weight:400;letter-spacing:1.06px;">25,465</div>
<div class="a" style="left:1123.0px;top:987.80px;width:635px;height:6.5px;border-radius:4px;background:#ebebeb"></div>
<div class="a" style="left:1123.0px;top:987.80px;width:330.5px;height:6.5px;border-radius:4px;background:#3282fd"></div>
<svg style="left:1126.5px;top:1030.2px" width="15" height="21" viewBox="0 0 15 21"><defs><linearGradient id="bgr" x1="0" y1="0" x2="0.6" y2="1"><stop offset="0" stop-color="#2ab0f3"/><stop offset="0.5" stop-color="#1f73f7"/><stop offset="1" stop-color="#2fb2f0"/></linearGradient></defs><path d="M0.4 1.2 Q0.5 0 1.6 0.5 L4.3 1.8 Q5 2.3 5 3.3 V14.5 L9.6 11.6 L7.9 10.6 Q7.1 10.1 7 9.3 L6.5 7.5 Q6.3 6.7 7.1 6.9 L12 8.6 Q13.3 9.2 13.3 10.7 V12.3 Q13.3 13.4 12.2 14.1 L6.9 17.6 Q5.4 18.8 4.1 18.2 Q2.8 17.4 0.5 15.4 Z" fill="url(#bgr)"/></svg>
<div class="t" style="left:1154.5px;top:1029.62px;font-size:21px;color:#222;font-weight:400;letter-spacing:0.65px;">www.bing.com</div>
<svg style="left:1307.0px;top:1033.0px" width="16" height="16" viewBox="0 0 16 16"><path d="M6.6 0.75 H2.1 Q0.75 0.75 0.75 2.1 V12.9 Q0.75 14.25 2.1 14.25 H12.9 Q14.25 14.25 14.25 12.9 V7.6" fill="none" stroke="#666" stroke-width="1.5"/><path d="M4.8 9.9 L13.6 1.3 M9.4 0.75 H14.25 V5.2" fill="none" stroke="#666" stroke-width="1.5"/></svg>
<div class="t" style="right:78.53999999999996px;top:1029.62px;font-size:21px;color:#222;font-weight:400;letter-spacing:0.56px;">10,326</div>
<div class="a" style="left:1123.0px;top:1065.60px;width:635px;height:6.5px;border-radius:4px;background:#ebebeb"></div>
<div class="a" style="left:1123.0px;top:1065.60px;width:134px;height:6.5px;border-radius:4px;background:#3282fd"></div>
<svg style="left:1122.6px;top:1106.2px" width="21" height="21" viewBox="0 0 17 17"><circle cx="8.5" cy="8.5" r="8.4" fill="#1877F2"/><path d="M9.7 17 V10.8 H11.8 L12.1 8.4 H9.7 V6.9 C9.7 6.2 9.9 5.8 10.9 5.8 H12.2 V3.7 C12 3.7 11.2 3.6 10.3 3.6 C8.5 3.6 7.2 4.7 7.2 6.7 V8.4 H5.1 V10.8 H7.2 V17 Z" fill="#fff"/></svg>
<div class="t" style="left:1154.5px;top:1107.42px;font-size:21px;color:#222;font-weight:400;letter-spacing:0.63px;">www.facebook.com</div>
<svg style="left:1355.3000000000002px;top:1110.8px" width="16" height="16" viewBox="0 0 16 16"><path d="M6.6 0.75 H2.1 Q0.75 0.75 0.75 2.1 V12.9 Q0.75 14.25 2.1 14.25 H12.9 Q14.25 14.25 14.25 12.9 V7.6" fill="none" stroke="#666" stroke-width="1.5"/><path d="M4.8 9.9 L13.6 1.3 M9.4 0.75 H14.25 V5.2" fill="none" stroke="#666" stroke-width="1.5"/></svg>
<div class="t" style="right:78.37999999999988px;top:1107.42px;font-size:21px;color:#222;font-weight:400;letter-spacing:0.72px;">4,280</div>
<div class="a" style="left:1123.0px;top:1143.40px;width:635px;height:6.5px;border-radius:4px;background:#ebebeb"></div>
<div class="a" style="left:1123.0px;top:1143.40px;width:56.5px;height:6.5px;border-radius:4px;background:#3282fd"></div>
<svg style="left:1122.6px;top:1188.1999999999998px" width="21" height="14" viewBox="0 0 21 14"><rect x="0" y="0" width="21" height="14" rx="3.8" fill="#FF0000"/><path d="M8.3 3.8 L13.6 7 L8.3 10.2 Z" fill="#fff"/></svg>
<div class="t" style="left:1154.5px;top:1185.22px;font-size:21px;color:#222;font-weight:400;letter-spacing:0.64px;">www.youtube.com</div>
<svg style="left:1343.8000000000002px;top:1188.6px" width="16" height="16" viewBox="0 0 16 16"><path d="M6.6 0.75 H2.1 Q0.75 0.75 0.75 2.1 V12.9 Q0.75 14.25 2.1 14.25 H12.9 Q14.25 14.25 14.25 12.9 V7.6" fill="none" stroke="#666" stroke-width="1.5"/><path d="M4.8 9.9 L13.6 1.3 M9.4 0.75 H14.25 V5.2" fill="none" stroke="#666" stroke-width="1.5"/></svg>
<div class="t" style="right:78.39999999999986px;top:1185.22px;font-size:21px;color:#222;font-weight:400;letter-spacing:0.7px;">2,837</div>
<div class="a" style="left:1123.0px;top:1221.20px;width:635px;height:6.5px;border-radius:4px;background:#ebebeb"></div>
<div class="a" style="left:1123.0px;top:1221.20px;width:37px;height:6.5px;border-radius:4px;background:#3282fd"></div>
<svg style="left:1122.6px;top:1263.3px" width="21" height="21" viewBox="0 0 17 17"><circle cx="8.5" cy="8.5" r="8.4" fill="#FF4500"/><ellipse cx="8.5" cy="10" rx="4.8" ry="3.3" fill="#fff"/><circle cx="12.6" cy="7.6" r="1.2" fill="#fff"/><circle cx="4.4" cy="7.6" r="1.2" fill="#fff"/><circle cx="11.5" cy="3.6" r="1" fill="#fff"/><path d="M8.5 6.7 L9.3 3.4 L11.5 3.8" fill="none" stroke="#fff" stroke-width="0.7"/><circle cx="6.8" cy="9.6" r="0.8" fill="#FF4500"/><circle cx="10.2" cy="9.6" r="0.8" fill="#FF4500"/><path d="M6.8 11.6 Q8.5 12.8 10.2 11.6" fill="none" stroke="#FF4500" stroke-width="0.6"/></svg>
<div class="t" style="left:1154.5px;top:1263.02px;font-size:21px;color:#222;font-weight:400;letter-spacing:0.68px;">www.reddit.com</div>
<svg style="left:1321.7px;top:1266.3999999999999px" width="16" height="16" viewBox="0 0 16 16"><path d="M6.6 0.75 H2.1 Q0.75 0.75 0.75 2.1 V12.9 Q0.75 14.25 2.1 14.25 H12.9 Q14.25 14.25 14.25 12.9 V7.6" fill="none" stroke="#666" stroke-width="1.5"/><path d="M4.8 9.9 L13.6 1.3 M9.4 0.75 H14.25 V5.2" fill="none" stroke="#666" stroke-width="1.5"/></svg>
<div class="t" style="right:78.84999999999991px;top:1263.02px;font-size:21px;color:#222;font-weight:400;letter-spacing:0.25px;">1,588</div>
<div class="a" style="left:1123.0px;top:1299.00px;width:635px;height:6.5px;border-radius:4px;background:#ebebeb"></div>
<div class="a" style="left:1123.0px;top:1299.00px;width:20.5px;height:6.5px;border-radius:4px;background:#3282fd"></div>
<div class="t" style="left:1391.3px;top:1345.92px;font-size:21px;color:#666;font-weight:400;letter-spacing:0.34px;">View all</div>
<svg style="left:1477.5px;top:1348px" width="12" height="17"><path d="M2.5 2.5 L9 8.5 L2.5 14.5" fill="none" stroke="#666" stroke-width="2.2"/></svg>
</body></html>
